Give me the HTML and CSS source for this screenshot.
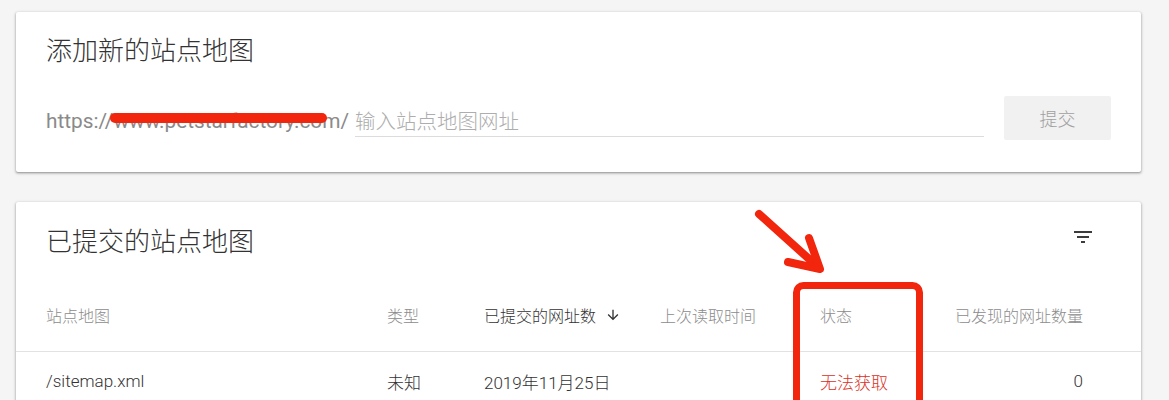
FILE: index.html
```html
<!DOCTYPE html>
<html lang="zh-CN">
<head>
    <meta charset="UTF-8">
    <meta name="viewport" content="width=device-width, initial-scale=1.0">
    <title>站点地图</title>
    <link rel="stylesheet" href="styles.css">
</head>
<body>
    <div class="page">
        <div class="card add-card">
            <h2 class="card-title">添加新的站点地图</h2>
            <div class="add-row">
                <span class="url-prefix">https://www.petstarfactory.com/</span>
                <input class="url-input" type="text" placeholder="输入站点地图网址">
                <button class="submit-btn" disabled>提交</button>
            </div>
        </div>

        <div class="card list-card">
            <div class="list-head">
                <h2 class="card-title">已提交的站点地图</h2>
                <svg class="filter-icon" viewBox="0 0 24 24" width="24" height="24">
                    <path d="M10 18h4v-2h-4v2zM3 6v2h18V6H3zm3 7h12v-2H6v2z"/>
                </svg>
            </div>
            <div class="table-row table-header">
                <span>站点地图</span>
                <span>类型</span>
                <span class="sorted">已提交的网址数
                    <svg class="sort-icon" viewBox="0 0 24 24" width="16" height="16">
                        <path d="M20 12l-1.41-1.41L13 16.17V4h-2v12.17l-5.58-5.59L4 12l8 8 8-8z"/>
                    </svg>
                </span>
                <span>上次读取时间</span>
                <span>状态</span>
                <span class="num">已发现的网址数量</span>
            </div>
            <div class="table-row table-data">
                <span class="latin">/sitemap.xml</span>
                <span>未知</span>
                <span>2019年11月25日</span>
                <span></span>
                <span class="status-error">无法获取</span>
                <span class="num">0</span>
            </div>
        </div>
    </div>

    <!-- 截图上的红色标注 -->
    <svg class="annotation" width="1169" height="400" viewBox="0 0 1169 400">
        <rect class="mark" x="110" y="113" width="217" height="10" rx="5"/>
        <rect class="box" x="796.5" y="285.5" width="123" height="200" rx="7"/>
        <line class="arrow" x1="759" y1="214" x2="818" y2="267"/>
        <polyline class="arrow" points="809,238 820,269 788,262"/>
    </svg>
</body>
</html>
```

FILE: styles.css
```css
body {
    margin: 0;
    position: relative;
    background-color: #f5f5f5;
    font-family: Roboto, "Noto Sans CJK SC", sans-serif;
    color: #212121;
    height: 400px;
    overflow: hidden;
}
.page {
    padding: 12px 28px 0 16px;
}
.card {
    background-color: white;
    border-radius: 2px;
    box-shadow: 0 1px 2px rgba(0,0,0,0.3), 0 1px 3px 1px rgba(0,0,0,0.12);
}
.card-title {
    margin: 0;
    font-size: 26px;
    font-weight: 300;
    line-height: 40px;
    color: #333;
}
.add-card {
    padding: 19px 30px 32px 30px;
}
.add-row {
    display: flex;
    align-items: center;
    height: 44px;
    margin-top: 25px;
}
.url-prefix {
    box-sizing: border-box;
    height: 38px;
    padding-top: 8px;
    line-height: 29px;
    font-size: 20.8px;
    color: #8a8a8a;
    white-space: nowrap;
}
.url-input {
    flex: 1;
    box-sizing: border-box;
    height: 38px;
    margin: 0 20px 0 6px;
    padding: 8px 0 0 0;
    border: none;
    border-bottom: 1px solid #dcdcdc;
    font-family: Roboto, "Noto Sans CJK SC", sans-serif;
    font-size: 20.5px;
    font-weight: 300;
    line-height: 29px;
    color: #333;
    background: transparent;
    outline: none;
}
.url-input::placeholder {
    color: #adadad;
}
.submit-btn {
    width: 107px;
    height: 44px;
    border: none;
    border-radius: 2px;
    background-color: #f1f1f1;
    color: #a0a0a0;
    font-family: Roboto, "Noto Sans CJK SC", sans-serif;
    font-size: 18px;
    font-weight: 300;
}
.list-card {
    margin-top: 30px;
    padding-top: 20px;
    height: 230px;
}
.list-head {
    display: flex;
    justify-content: space-between;
    align-items: flex-start;
    padding: 0 46px 0 30px;
}
.filter-icon {
    margin-top: 3px;
    fill: #3c3c3c;
}
.table-row {
    display: grid;
    grid-template-columns: 341px 97px 176px 160px 135px 1fr;
    align-items: center;
    padding: 0 58px 0 30px;
}
.table-header {
    margin-top: 17px;
    height: 72px;
    border-bottom: 1px solid #e2e2e2;
    font-size: 16px;
    font-weight: 300;
    color: #8c8c8c;
}
.table-header .sorted {
    display: flex;
    align-items: center;
    color: #333;
}
.sort-icon {
    margin-left: 9px;
    fill: #333;
}
.table-data {
    height: 58px;
    font-size: 17px;
    font-weight: 300;
    color: #333;
}
.num {
    text-align: right;
}
.status-error {
    color: #d93025;
}
.annotation {
    position: absolute;
    top: 0;
    left: 0;
    pointer-events: none;
}
.annotation .mark {
    fill: #f2250d;
}
.annotation .box {
    fill: none;
    stroke: #f2250d;
    stroke-width: 7;
}
.annotation .arrow {
    fill: none;
    stroke: #f2250d;
    stroke-width: 8;
    stroke-linecap: round;
    stroke-linejoin: round;
}
```
